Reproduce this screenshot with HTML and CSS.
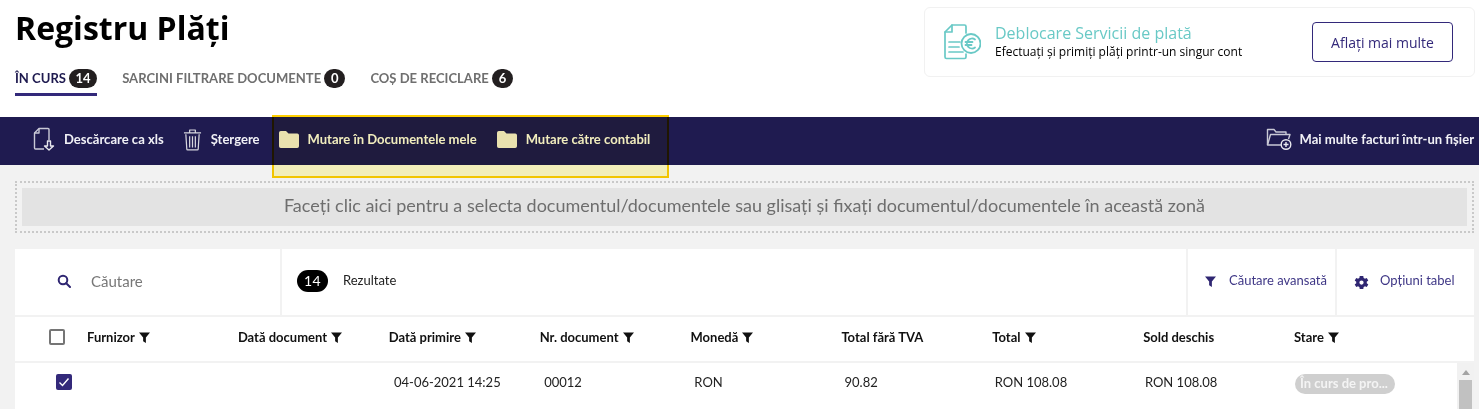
FILE: index.html
```html
<!DOCTYPE html>
<html lang="ro">
<head>
<meta charset="utf-8">
<title>Registru Plăți</title>
<link rel="stylesheet" href="styles.css">
</head>
<body>
<header class="top">
  <div class="top-left">
    <h1 class="title">Registru Plăți</h1>
    <nav class="tabs">
      <a class="tab active">ÎN CURS <span class="pill wide">14</span></a>
      <a class="tab">SARCINI FILTRARE DOCUMENTE <span class="pill">0</span></a>
      <a class="tab">COȘ DE RECICLARE <span class="pill">6</span></a>
    </nav>
  </div>
  <aside class="promo">
    <svg class="promo-icon" viewBox="0 0 38 38" fill="none" stroke="#69c9c6" stroke-width="1.7" stroke-linecap="round" stroke-linejoin="round">
      <path d="M23 10V3.500a1.500 1.500 0 0 0-1.500-1.500H9L2 9v25a1.500 1.500 0 0 0 1.500 1.500H21.500a1.500 1.500 0 0 0 1.500-1.500V31"/>
      <path d="M9 2v7H2"/>
      <path d="M6 19h11M6 24h10M6 29h14"/>
      <circle cx="28" cy="20.500" r="9.500" stroke-width="1.800"/>
      <path d="M32 16.500a5 5 0 1 0 0 8M22.500 19h7M22.500 22h6" stroke-width="1.800"/>
    </svg>
    <div class="promo-text">
      <div class="promo-title">Deblocare Servicii de plată</div>
      <div class="promo-sub">Efectuați și primiți plăți printr-un singur cont</div>
    </div>
    <button class="promo-btn">Aflați mai multe</button>
  </aside>
</header>

<div class="actionbar">
  <a class="action first">
    <svg class="ic-doc" viewBox="0 0 22 24" fill="none" stroke="#c9c9d6" stroke-width="1.400" stroke-linejoin="round">
      <path d="M16 13V2.500a1 1 0 0 0-1-1H6L1.500 6v15a1 1 0 0 0 1 1H11"/>
      <path d="M6 1.500V6H1.500"/>
      <path d="M14.500 14v5h-3l4.500 4 4.500-4h-3v-5z" stroke="#e8e8ee"/>
    </svg>
    Descărcare ca xls
  </a>
  <a class="action gap-trash">
    <svg class="ic-trash" viewBox="0 0 20 24" fill="none" stroke="#d6d6de" stroke-width="1.300" stroke-linejoin="round">
      <path d="M1 5h18M7 4.500V2h6v2.500"/>
      <path d="M3 6.500l1 15.500a1 1 0 0 0 1 1h10a1 1 0 0 0 1-1l1-15.500"/>
      <path d="M7 8.500v12M10 8.500v12M13 8.500v12"/>
    </svg>
    Ștergere
  </a>
  <a class="action gap-folder1">
    <svg class="ic-folder" viewBox="0 0 21 17"><path d="M1 1.800A1.800 1.800 0 0 1 2.800 0H8l2.500 2.500h8.700A1.800 1.800 0 0 1 21 4.300v11A1.800 1.800 0 0 1 19.200 17H2.800A1.800 1.800 0 0 1 1 15.200z"/></svg>
    Mutare în Documentele mele
  </a>
  <a class="action gap-folder2">
    <svg class="ic-folder" viewBox="0 0 21 17"><path d="M1 1.800A1.800 1.800 0 0 1 2.800 0H8l2.500 2.500h8.700A1.800 1.800 0 0 1 21 4.300v11A1.800 1.800 0 0 1 19.200 17H2.800A1.800 1.800 0 0 1 1 15.200z"/></svg>
    Mutare către contabil
  </a>
  <a class="action last">
    <svg class="ic-multi" viewBox="0 0 26 22" fill="none" stroke="#c9c9d6" stroke-width="1.400" stroke-linejoin="round">
      <path d="M15 17H1.500V1.500h6.500l2 2.500h10v2.500"/>
      <path d="M1.500 17l3-10.500h19.500L22.500 11"/>
      <circle cx="20" cy="16.500" r="4.800" stroke="#e8e8ee"/>
      <path d="M20 14v5M17.500 16.500h5" stroke="#e8e8ee"/>
    </svg>
    Mai multe facturi într-un fișier
  </a>
</div>
<div class="highlight"></div>

<main class="content">
  <div class="dropzone">
    <div class="dropzone-inner">Faceți clic aici pentru a selecta documentul/documentele sau glisați și fixați documentul/documentele în această zonă</div>
  </div>

  <section class="panel">
    <div class="toolbar">
      <div class="search">
        <svg class="ic-search" viewBox="0 0 14 14" fill="none" stroke="#2f2672" stroke-width="2"><circle cx="6" cy="6" r="4.300"/><path d="M9.200 9.200L13 13" stroke-linecap="round"/></svg>
        <span class="search-ph">Căutare</span>
      </div>
      <div class="results"><span class="count">14</span><span class="results-label">Rezultate</span></div>
      <div class="tool tool-adv">
        <svg class="ic-filter" viewBox="0 0 12 12"><path d="M0 0.500h12L7.500 6v6L4.500 10V6z" fill="#2f2672"/></svg>
        <span>Căutare avansată</span>
      </div>
      <div class="tool tool-opt">
        <svg class="ic-gear" viewBox="0 0 24 24"><path d="M19.400 13a7.500 7.500 0 0 0 0-2l2.200-1.700-2.200-3.700-2.600 1a7.500 7.500 0 0 0-1.800-1L14.500 2.800h-5L9 5.600a7.500 7.500 0 0 0-1.800 1l-2.600-1-2.200 3.700L4.600 11a7.500 7.500 0 0 0 0 2l-2.200 1.700 2.200 3.700 2.600-1a7.500 7.500 0 0 0 1.800 1l.5 2.800h5l.5-2.800a7.500 7.500 0 0 0 1.800-1l2.600 1 2.200-3.700zM12 15a3 3 0 1 1 0-6 3 3 0 0 1 0 6z" fill="#2f2672"/></svg>
        <span>Opțiuni tabel</span>
      </div>
    </div>

    <div class="grid head">
      <div class="check-cell"><span class="checkbox"></span></div>
      <div class="th">Furnizor <svg class="th-f" viewBox="0 0 12 12"><path d="M0 0.500h12L7.500 6v6L4.500 10V6z"/></svg></div>
      <div class="th">Dată document <svg class="th-f" viewBox="0 0 12 12"><path d="M0 0.500h12L7.500 6v6L4.500 10V6z"/></svg></div>
      <div class="th">Dată primire <svg class="th-f" viewBox="0 0 12 12"><path d="M0 0.500h12L7.500 6v6L4.500 10V6z"/></svg></div>
      <div class="th">Nr. document <svg class="th-f" viewBox="0 0 12 12"><path d="M0 0.500h12L7.500 6v6L4.500 10V6z"/></svg></div>
      <div class="th">Monedă <svg class="th-f" viewBox="0 0 12 12"><path d="M0 0.500h12L7.500 6v6L4.500 10V6z"/></svg></div>
      <div class="th">Total fără TVA</div>
      <div class="th">Total <svg class="th-f" viewBox="0 0 12 12"><path d="M0 0.500h12L7.500 6v6L4.500 10V6z"/></svg></div>
      <div class="th">Sold deschis</div>
      <div class="th">Stare <svg class="th-f" viewBox="0 0 12 12"><path d="M0 0.500h12L7.500 6v6L4.500 10V6z"/></svg></div>
    </div>

    <div class="body-wrap">
      <div class="grid row">
        <div class="check-cell"><span class="checkbox on"><svg viewBox="0 0 16 16" fill="none" stroke="#fff" stroke-width="1.400"><path d="M3.500 8.500l3 3 6-7"/></svg></span></div>
        <div class="td"></div>
        <div class="td"></div>
        <div class="td">04-06-2021 14:25</div>
        <div class="td">00012</div>
        <div class="td">RON</div>
        <div class="td">90.82</div>
        <div class="td">RON 108.08</div>
        <div class="td">RON 108.08</div>
        <div class="td"><span class="status">În curs de pro...</span></div>
      </div>
      <div class="scrollbar"><span class="arrow"></span><span class="thumb"></span></div>
    </div>
  </section>
</main>
</body>
</html>
```
FILE: styles.css
```css
* { box-sizing: border-box; }
html, body { margin: 0; height: 409px; overflow: hidden; }
body { position: relative; background: #f2f2f2; font-family: "Lato", sans-serif; color: #000; }

.top { height: 117px; background: #fff; display: flex; justify-content: space-between; align-items: flex-start; padding: 6px 0 0 15px; }
.title { margin: 0; font: 700 32px/44px "Open Sans", sans-serif; color: #000; }
.tabs { display: flex; gap: 25px; margin-top: 16px; }
.tab { display: block; height: 30px; padding-top: 3px; font: 700 13.06px/18px "Lato", sans-serif; color: #6f6f6f; white-space: nowrap; }
.tab.active { color: #1e1a4f; border-bottom: 3px solid #33297a; }
.pill { display: inline-block; min-width: 21px; height: 19px; padding: 0 4px; border-radius: 10px; background: #231f20; color: #fff; font: 700 13px/19px "Lato", sans-serif; text-align: center; vertical-align: top; }
.pill.wide { min-width: 28px; }

.promo { display: flex; align-items: center; width: 551px; height: 70px; margin: 1px 4px 0 0; padding: 0 21px 0 18px; background: #fff; border: 1px solid #f1f1f1; border-radius: 6px; }
.promo-icon { width: 38px; height: 38px; flex: none; margin-right: 14px; }
.promo-text { flex: 1; margin-top: -1px; }
.promo-title { font: 400 16px/20px "Open Sans", sans-serif; color: #69c9c6; }
.promo-sub { font: 400 12px/16px "Open Sans", sans-serif; color: #000; margin-top: 1px; }
.promo-btn { width: 141px; height: 40px; border: 1px solid #33297a; border-radius: 4px; background: #fff; color: #33297a; font: 400 14px "Open Sans", sans-serif; }

.actionbar { display: flex; align-items: center; height: 48px; padding-bottom: 4px; background: #1f1b50; color: #f1f1f6; font: 700 13.06px/18px "Lato", sans-serif; white-space: nowrap; }
.action { display: flex; align-items: center; }
.action.first { margin-left: 33px; }
.gap-trash { margin-left: 19px; }
.gap-folder1 { margin-left: 18px; }
.gap-folder2 { margin-left: 19px; }
.action.last { margin-left: auto; margin-right: 5px; }
.ic-doc { width: 22px; height: 24px; margin-right: 9px; }
.ic-trash { width: 19px; height: 23px; margin-right: 9px; }
.ic-folder { width: 21px; height: 17px; margin-right: 9px; fill: #e9e5e3; }
.ic-multi { width: 26px; height: 22px; margin-right: 8px; }

.highlight { position: absolute; left: 272px; top: 115px; width: 397px; height: 63px; background: #fffbc4; border: 2px solid #ffd000; mix-blend-mode: multiply; }

.content { padding: 16px 5px 0 15px; }
.dropzone { height: 52px; padding: 5px 5px 0; border: 2px dotted #c9c9c9; }
.dropzone-inner { height: 38px; background: #e3e3e3; color: #6e6e6e; font: 400 18px/34px "Lato", sans-serif; text-align: center; white-space: nowrap; }

.panel { margin-top: 16px; background: #f2f2f2; }
.toolbar { display: flex; height: 66px; gap: 2px; }
.toolbar > div { background: #fff; }
.search { width: 265px; display: flex; align-items: center; padding: 0 0 2px 42px; }
.ic-search { width: 14px; height: 14px; margin-right: 20px; }
.search-ph { font: 400 15px/20px "Lato", sans-serif; color: #777; }
.results { flex: 1; display: flex; align-items: center; padding: 0 0 2px 15px; }
.count { width: 31px; height: 22px; margin-right: 15px; border-radius: 11px; background: #000; color: #fff; font: 400 14px/22px "Lato", sans-serif; letter-spacing: .5px; text-align: center; }
.results-label { font: 400 13px/18px "Lato", sans-serif; color: #222; margin-top: -2px; }
.tool { display: flex; align-items: center; padding-bottom: 2px; font: 400 13px/18px "Lato", sans-serif; color: #3f3786; white-space: nowrap; }
.tool span { margin-top: -2px; }
.tool-adv { width: 147px; padding-left: 17px; }
.ic-filter { width: 11px; height: 11px; margin-right: 13px; }
.tool-opt { width: 137px; padding-left: 16px; }
.ic-gear { width: 17px; height: 17px; margin-right: 10px; margin-top: 2px; }

.grid { display: grid; grid-template-columns: 72px repeat(9, 150.875px); background: #fff; }
.head { height: 44px; margin-top: 2px; padding-bottom: 4px; align-items: center; }
.check-cell { display: flex; justify-content: flex-start; padding-left: 34px; }
.checkbox { display: block; width: 16px; height: 16px; border: 2px solid #757575; border-radius: 2px; background: #fff; }
.checkbox.on { margin-left: 7px; margin-top: 1px; border: 0; background: #33297a; }
.checkbox.on svg { display: block; width: 16px; height: 16px; }
.th { font: 700 13px/18px "Lato", sans-serif; color: #111; white-space: nowrap; }
.th-f { width: 11px; height: 11px; margin-left: 1px; fill: #111; vertical-align: -1px; }

.body-wrap { display: flex; height: 46px; margin-top: 2px; background: #fff; overflow: hidden; }
.row { flex: 1; grid-template-columns: 73.6px repeat(9, 150.2px); align-items: start; padding-top: 10px; }
.td { padding-left: 5px; font: 400 13px/18px "Lato", sans-serif; color: #222; white-space: nowrap; }
.status { display: inline-block; width: 100px; height: 20px; margin-top: 1px; padding-left: 5px; border-radius: 10px; background: #cfcfcf; color: #f4f4f4; font: 700 13px/19px "Lato", sans-serif; }
.scrollbar { width: 17px; flex: none; background: #f1f1f1; display: flex; flex-direction: column; align-items: center; }
.arrow { width: 0; height: 0; margin-top: 7px; border: 4px solid transparent; border-top: 0; border-bottom: 5px solid #a3a3a3; }
.thumb { width: 13px; flex: 1; margin-top: 5px; background: #c1c1c1; }
```
